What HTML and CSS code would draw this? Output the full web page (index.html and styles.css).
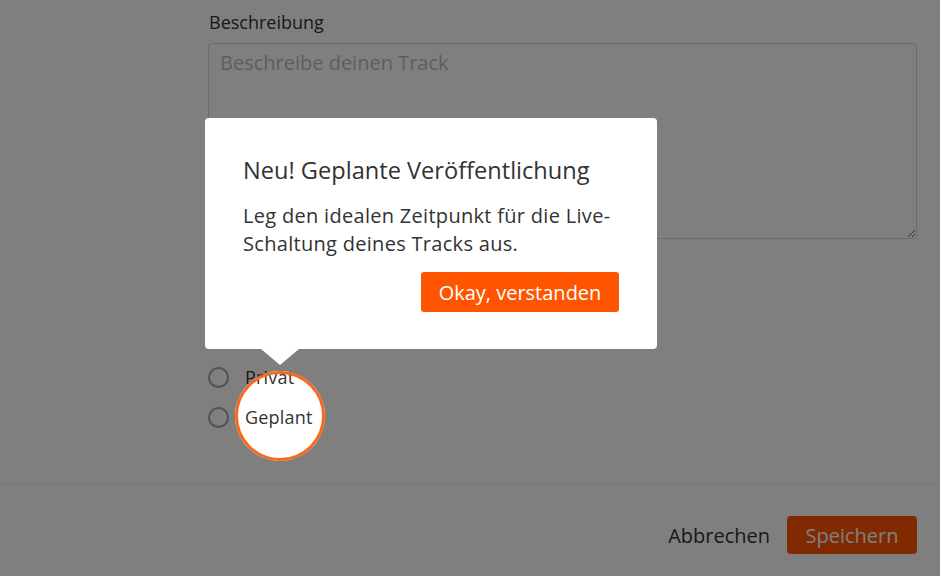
FILE: index.html
```html
<!DOCTYPE html>
<html lang="de">
<head>
<meta charset="utf-8">
<title>Track bearbeiten</title>
<link rel="stylesheet" href="styles.css">
</head>
<body>
<div class="page">
  <main class="form">
    <label class="label" for="desc">Beschreibung</label>
    <textarea id="desc" class="textarea" placeholder="Beschreibe deinen Track"></textarea>

    <section class="visibility">
      <div class="label section-label">Sichtbarkeit</div>
      <label class="radio-row"><span class="radio"></span><span class="radio-text">Öffentlich</span></label>
      <label class="radio-row"><span class="radio"></span><span class="radio-text">Privat</span></label>
      <label class="radio-row"><span class="radio"></span><span class="radio-text">Geplant</span></label>
    </section>
  </main>

  <footer class="footer">
    <button class="btn-link">Abbrechen</button>
    <button class="btn-primary">Speichern</button>
  </footer>
</div>

<div class="spotlight"></div>

<div class="popover">
  <h2 class="popover-title">Neu! Geplante Veröffentlichung</h2>
  <p class="popover-text">Leg den idealen Zeitpunkt für die Live-<br>Schaltung deines Tracks aus.</p>
  <div class="popover-actions">
    <button class="btn-ok">Okay, verstanden</button>
  </div>
</div>
</body>
</html>
```

FILE: styles.css
```css
* { box-sizing: border-box; }

html, body {
  margin: 0;
  padding: 0;
  background: #fff;
  font-family: "Open Sans", "Liberation Sans", sans-serif;
  color: #333;
  overflow: hidden;
}

.page {
  width: 940px;
  height: 576px;
  display: flex;
  flex-direction: column;
}

.form {
  flex: 1;
  padding: 11px 23px 0 208px;
  display: flex;
  flex-direction: column;
}

.label {
  display: block;
  font-size: 18px;
  line-height: 22px;
  color: #333;
  padding-left: 1px;
}

.textarea {
  margin-top: 10px;
  width: 709px;
  height: 196px;
  border: 1px solid #d6d6d6;
  border-radius: 4px;
  padding: 7px 11px 6px;
  font-family: inherit;
  font-size: 20px;
  line-height: 24px;
  color: #333;
  background: #fff;
  resize: both;
  outline: none;
}

.textarea::placeholder {
  color: #bdbdbd;
}

.visibility {
  margin-top: 38px;
  display: flex;
  flex-direction: column;
}

.section-label {
  margin-bottom: 18px;
}

.radio-row {
  height: 40px;
  display: flex;
  align-items: center;
  gap: 16px;
}

.radio {
  width: 21px;
  height: 21px;
  border: 2px solid #a3a3a3;
  border-radius: 50%;
  background: #fff;
}

.radio-text {
  font-size: 18px;
  color: #333;
  letter-spacing: 0.2px;
}

.footer {
  height: 92px;
  border-top: 1px solid #eee;
  display: flex;
  justify-content: flex-end;
  align-items: flex-start;
  gap: 17px;
  padding: 31px 23px 0 0;
}

.btn-link {
  height: 38px;
  padding: 0;
  border: none;
  background: none;
  font-family: inherit;
  font-size: 20px;
  color: #333;
}

.btn-primary {
  width: 130px;
  height: 38px;
  border: none;
  border-radius: 4px;
  background: #f50;
  color: #fff;
  font-family: inherit;
  font-size: 20px;
}

.spotlight {
  position: absolute;
  left: 235px;
  top: 371px;
  width: 90px;
  height: 90px;
  border-radius: 50%;
  border: 3px solid #f36b1f;
  box-shadow: 0 0 0 3000px rgba(0, 0, 0, 0.5);
}

.popover {
  position: absolute;
  left: 205px;
  top: 118px;
  width: 452px;
  padding: 37px 38px 37px 38px;
  background: #fff;
  border-radius: 4px;
}

.popover::after {
  content: "";
  position: absolute;
  left: 56px;
  bottom: -16px;
  border-left: 19px solid transparent;
  border-right: 19px solid transparent;
  border-top: 16px solid #fff;
}

.popover-title {
  margin: 0;
  font-size: 23.6px;
  line-height: 30px;
  font-weight: 400;
  color: #333;
}

.popover-text {
  margin: 17px 0 0 0;
  font-size: 20px;
  line-height: 28px;
  letter-spacing: 0.3px;
  color: #333;
}

.popover-actions {
  margin-top: 14px;
  display: flex;
  justify-content: flex-end;
}

.btn-ok {
  width: 198px;
  height: 40px;
  border: none;
  border-radius: 3px;
  background: #ff5500;
  color: #fff;
  font-family: inherit;
  font-size: 20px;
}
```
